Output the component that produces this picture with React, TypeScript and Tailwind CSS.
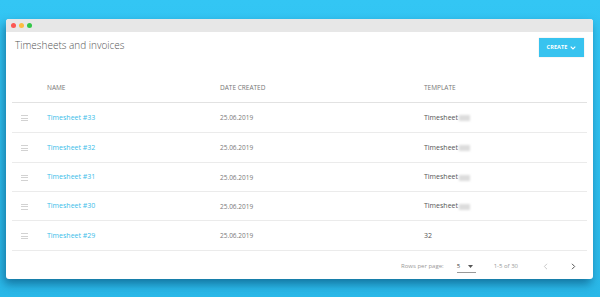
import React from "react";

const rows = [
  { name: "Timesheet #33", date: "25.06.2019", tpl: "Timesheet", blur: true, h: "h-[30px]" },
  { name: "Timesheet #32", date: "25.06.2019", tpl: "Timesheet", blur: true, h: "h-[30px]" },
  { name: "Timesheet #31", date: "25.06.2019", tpl: "Timesheet", blur: true, h: "h-[29px]" },
  { name: "Timesheet #30", date: "25.06.2019", tpl: "Timesheet", blur: true, h: "h-[29px]" },
  { name: "Timesheet #29", date: "25.06.2019", tpl: "32", blur: false, h: "h-[30px]" },
];

function Burger() {
  return (
    <div className="flex flex-col gap-[1.5px] w-[7px] ml-[9px]">
      <div className="h-[1px] bg-[#d2d2d2]" />
      <div className="h-[1px] bg-[#d2d2d2]" />
      <div className="h-[1px] bg-[#d2d2d2]" />
    </div>
  );
}

export default function App() {
  return (
    <div
      className="w-[600px] h-[297px] bg-gradient-to-b from-[#33c6f4] to-[#2ab8e8] pt-[19px] pl-[6px]"
      style={{ fontFamily: '"Open Sans", "Liberation Sans", sans-serif' }}
    >
      <div className="w-[587px] h-[260px] bg-white rounded-[3px] shadow-[-2px_5px_10px_rgba(0,60,100,0.55)] flex flex-col overflow-hidden">
        <div className="h-[13px] bg-[#e7e7e7] flex items-center gap-[3px] pl-[5px] shrink-0">
          <div className="w-[5px] h-[5px] rounded-full bg-[#fc5753]" />
          <div className="w-[5px] h-[5px] rounded-full bg-[#fdbc40]" />
          <div className="w-[5px] h-[5px] rounded-full bg-[#33c748]" />
        </div>
        <div className="h-[41px] flex items-start justify-between pl-[9px] pr-[9px] shrink-0">
          <div className="text-[10px] font-light text-[#555] mt-[6px] leading-[14px]">Timesheets and invoices</div>
          <div className="mt-[6px] h-[19px] w-[45px] bg-[#38c3ef] flex items-center justify-center gap-[3px] shadow-[0_0_1px_rgba(0,0,0,0.2)]">
            <span className="text-[5.5px] font-bold text-white tracking-[0.1px]">CREATE</span>
            <svg width="6" height="4" viewBox="0 0 6 4"><path d="M0.7 0.7 L3 3 L5.3 0.7" stroke="white" strokeWidth="1.1" fill="none" /></svg>
          </div>
        </div>
        <div className="mx-[6px] flex flex-col">
          <div className="grid grid-cols-[35px_173px_204px_1fr] items-center h-[30px] border-b border-[#e2e2e2] text-[6.5px] text-[#777] pt-[1px]">
            <div />
            <div>NAME</div>
            <div>DATE CREATED</div>
            <div>TEMPLATE</div>
          </div>
          {rows.map((r) => (
            <div key={r.name} className={`grid grid-cols-[35px_173px_204px_1fr] items-center ${r.h} border-b border-[#ebebeb] pt-[1px]`}>
              <Burger />
              <div className="text-[7px] text-[#3bbde9]">{r.name}</div>
              <div className="text-[6.5px] text-[#7a7a7a]">{r.date}</div>
              <div className="text-[7px] text-[#555] flex items-center">
                <span>{r.tpl}</span>
                {r.blur && <span className="inline-block w-[11px] h-[6px] bg-[#dcdcdc] blur-[1px] ml-[1px]" />}
              </div>
            </div>
          ))}
          <div className="h-[29px] flex items-center text-[6px] text-[#999] pt-[1px]">
            <div className="ml-[389px]">Rows per page:</div>
            <div className="ml-[13px] flex items-center h-[13px] w-[19px] border-b border-[#999] pt-[1px]">
              <span className="text-[6px] text-[#444]">5</span>
              <svg className="ml-[8px]" width="5" height="3" viewBox="0 0 5 3"><path d="M0 0 L5 0 L2.5 3 Z" fill="#555" /></svg>
            </div>
            <div className="ml-[18px]">1-5 of 30</div>
            <svg className="ml-[25px]" width="5" height="7" viewBox="0 0 5 7"><path d="M4 0.8 L1.3 3.5 L4 6.2" stroke="#c8c8c8" strokeWidth="1" fill="none" /></svg>
            <svg className="ml-[23px]" width="5" height="7" viewBox="0 0 5 7"><path d="M1 0.8 L3.7 3.5 L1 6.2" stroke="#555" strokeWidth="1" fill="none" /></svg>
          </div>
        </div>
      </div>
    </div>
  );
}
